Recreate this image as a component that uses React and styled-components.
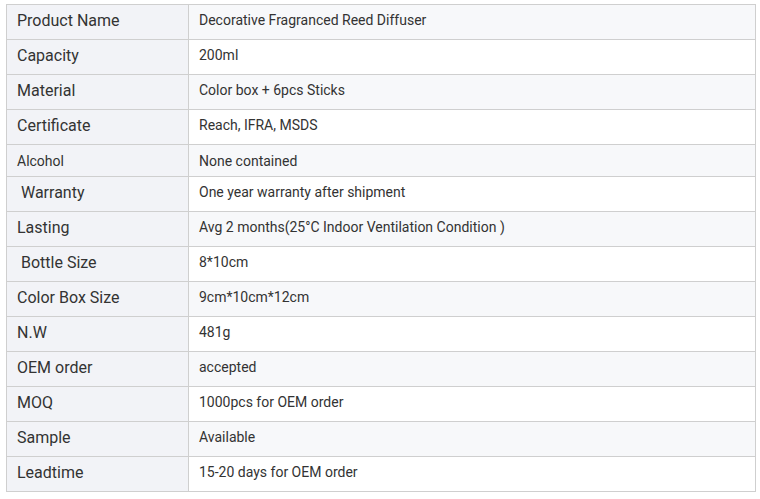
import React from 'react'
import styled, { createGlobalStyle } from 'styled-components'

const GlobalStyle = createGlobalStyle`
  body {
    margin: 0;
    background: #fff;
    font-family: Roboto, "Liberation Sans", Arial, sans-serif;
  }
`

const Page = styled.div`
  padding: 4px 0 0 6px;
`

const SpecTable = styled.table`
  width: 750px;
  border-collapse: collapse;
  table-layout: fixed;
  color: #333;
`

const Row = styled.tr`
  height: ${props => (props.small ? 32 : 35)}px;
`

const Label = styled.td`
  width: 161px;
  padding: 0 10px ${props => (props.small ? 0 : 4)}px;
  border: 1px solid #cfcfcf;
  background: #f2f3f7;
  font-size: ${props => (props.small ? 14 : 16)}px;
  white-space: pre;
`

const Value = styled.td`
  padding: 0 10px ${props => (props.small ? 0 : 4)}px;
  border: 1px solid #cfcfcf;
  background: ${props => (props.shaded ? '#f7f8fa' : '#fff')};
  font-size: 14px;
`

const specs = [
  ['Product Name', 'Decorative Fragranced Reed Diffuser'],
  ['Capacity', '200ml'],
  ['Material', 'Color box + 6pcs Sticks'],
  ['Certificate', 'Reach, IFRA, MSDS'],
  ['Alcohol', 'None contained', true],
  [' Warranty', 'One year warranty after shipment'],
  ['Lasting', 'Avg 2 months(25°C Indoor Ventilation Condition )'],
  [' Bottle Size', '8*10cm'],
  ['Color Box Size', '9cm*10cm*12cm'],
  ['N.W', '481g'],
  ['OEM order', 'accepted'],
  ['MOQ', '1000pcs for OEM order'],
  ['Sample', 'Available'],
  ['Leadtime', '15-20 days for OEM order']
]

export default function App() {
  return (
    <Page>
      <GlobalStyle />
      <SpecTable>
        <tbody>
          {specs.map(([label, value, small], index) => (
            <Row key={index} small={small}>
              <Label small={small}>{label}</Label>
              <Value small={small} shaded={index % 2 === 0}>{value}</Value>
            </Row>
          ))}
        </tbody>
      </SpecTable>
    </Page>
  )
}
